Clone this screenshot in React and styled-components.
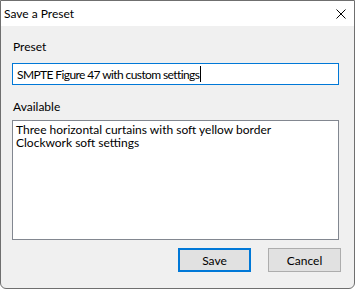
import React from 'react'
import styled, { createGlobalStyle } from 'styled-components'

const GlobalStyle = createGlobalStyle`
    html, body {
        margin: 0;
        padding: 0;
        background: #ffffff;
    }
    body {
        font-family: Lato, Roboto, sans-serif;
        font-size: 12px;
        color: #000000;
    }
`

const Window = styled.div`
    width: 355px;
    height: 289px;
    box-sizing: border-box;
    border: 1px solid #6f6f6f;
    border-radius: 0 0 6px 6px;
    background: #f0f0f0;
    display: flex;
    flex-direction: column;
    overflow: hidden;
`

const TitleBar = styled.div`
    height: 25px;
    background: #ffffff;
    display: flex;
    align-items: center;
    justify-content: space-between;
    padding: 0 8px 0 3px;
    .title{
        line-height: 16px;
    }
`

const CloseIcon = styled.svg`
    width: 10px;
    height: 10px;
    margin-top: 1px;
`

const Body = styled.div`
    display: flex;
    flex-direction: column;
    padding: 13px 15px 0 11px;
`

const Label = styled.div`
    line-height: 16px;
    padding-left: 1px;
    margin-bottom: ${props => props.gap}px;
`

const TextBox = styled.div`
    height: 22px;
    box-sizing: border-box;
    border: 1px solid #0078d7;
    background: #ffffff;
    display: flex;
    align-items: center;
    padding-left: 4px;
    margin-bottom: 14px;
    white-space: nowrap;
    .value{
        letter-spacing: -0.6px;
    }
    .caret{
        width: 1px;
        height: 16px;
        background: #000000;
        margin-left: 1px;
    }
`

const ListBox = styled.div`
    height: 120px;
    box-sizing: border-box;
    border: 1px solid #828790;
    background: #ffffff;
    padding: 2px 0 0 3px;
    margin-bottom: 8px;
`

const ListItem = styled.div`
    line-height: 13px;
    white-space: nowrap;
`

const ButtonRow = styled.div`
    display: flex;
    justify-content: flex-end;
    gap: 17px;
    margin-right: -2px;
`

const Button = styled.div`
    width: 73px;
    height: 24px;
    box-sizing: border-box;
    background: #e1e1e1;
    border: ${props => props.primary ? '2px solid #0078d7' : '1px solid #adadad'};
    display: flex;
    align-items: center;
    justify-content: center;
`

export default function App() {
    const presets = [
        'Three horizontal curtains with soft yellow border',
        'Clockwork soft settings',
    ]

    return (
        <>
            <GlobalStyle />
            <Window>
                <TitleBar>
                    <span className='title'>Save a Preset</span>
                    <CloseIcon viewBox="0 0 10 10">
                        <path d="M0.5 0.5 L9.5 9.5 M9.5 0.5 L0.5 9.5" stroke="#000" strokeWidth="1" fill="none" />
                    </CloseIcon>
                </TitleBar>
                <Body>
                    <Label gap={8}>Preset</Label>
                    <TextBox>
                        <span className='value'>SMPTE Figure 47 with custom settings</span>
                        <span className='caret' />
                    </TextBox>
                    <Label gap={5}>Available</Label>
                    <ListBox>
                        {presets.map(p => (
                            <ListItem key={p}>{p}</ListItem>
                        ))}
                    </ListBox>
                    <ButtonRow>
                        <Button primary>Save</Button>
                        <Button>Cancel</Button>
                    </ButtonRow>
                </Body>
            </Window>
        </>
    )
}
